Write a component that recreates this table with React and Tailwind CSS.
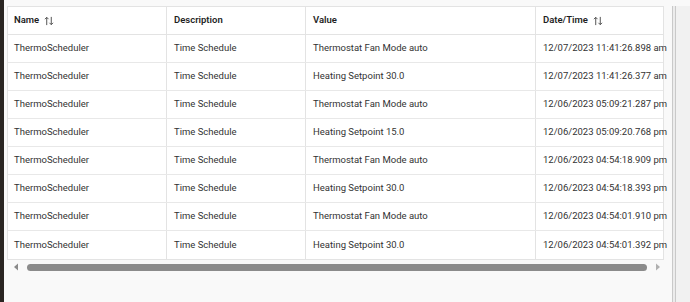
import React from 'react';

const rows = [
  ['ThermoScheduler', 'Time Schedule', 'Thermostat Fan Mode auto', '12/07/2023 11:41:26.898 am'],
  ['ThermoScheduler', 'Time Schedule', 'Heating Setpoint 30.0', '12/07/2023 11:41:26.377 am'],
  ['ThermoScheduler', 'Time Schedule', 'Thermostat Fan Mode auto', '12/06/2023 05:09:21.287 pm'],
  ['ThermoScheduler', 'Time Schedule', 'Heating Setpoint 15.0', '12/06/2023 05:09:20.768 pm'],
  ['ThermoScheduler', 'Time Schedule', 'Thermostat Fan Mode auto', '12/06/2023 04:54:18.909 pm'],
  ['ThermoScheduler', 'Time Schedule', 'Heating Setpoint 30.0', '12/06/2023 04:54:18.393 pm'],
  ['ThermoScheduler', 'Time Schedule', 'Thermostat Fan Mode auto', '12/06/2023 04:54:01.910 pm'],
  ['ThermoScheduler', 'Time Schedule', 'Heating Setpoint 30.0', '12/06/2023 04:54:01.392 pm'],
];

const widths = ['w-[159px]', 'w-[139px]', 'w-[230px]', 'w-[127px]'];

function SortIcon() {
  return (
    <svg width="10" height="10" viewBox="0 0 11 11" className="ml-[5px]" fill="none" stroke="#444" strokeWidth="1">
      <path d="M3 10V1.5M1 3.5L3 1.5L5 3.5" />
      <path d="M8 1v8.5M6 7.5L8 9.5L10 7.5" />
    </svg>
  );
}

function Cell({ i, children, head }) {
  return (
    <div
      className={`${widths[i]} shrink-0 h-full flex items-center whitespace-nowrap ${i === 0 ? 'pl-[6px]' : 'pl-[7px]'} ${i < 3 ? 'border-r border-[#e3e3e3]' : ''} ${head ? 'font-semibold text-[#1f1f1f]' : 'text-[#333]'}`}
    >
      {children}
    </div>
  );
}

export default function App() {
  return (
    <div className="flex h-[302px] w-[690px] overflow-hidden text-[9.5px]" style={{ fontFamily: 'Roboto, "Liberation Sans", sans-serif' }}>
      <div className="w-[4px] bg-[#2a2522]" />
      <div className="flex-1 bg-[#f9f9f9] pl-[3px] pt-[6px] flex">
        <div className="w-[657px]">
          <div className="bg-white border border-[#e3e3e3]">
            <div className="flex h-[28px] border-b border-[#e3e3e3]">
              <Cell i={0} head>Name <SortIcon /></Cell>
              <Cell i={1} head>Description</Cell>
              <Cell i={2} head>Value</Cell>
              <Cell i={3} head>Date/Time <SortIcon /></Cell>
            </div>
            {rows.map((r, k) => (
              <div key={k} className={`flex h-[28px] ${k < rows.length - 1 ? 'border-b border-[#e8e8e8]' : ''}`}>
                {r.map((c, i) => (
                  <Cell key={i} i={i}>{c}</Cell>
                ))}
              </div>
            ))}
          </div>
          <div className="flex items-center h-[14px] bg-[#f9f9f9]">
            <svg width="6" height="8" viewBox="0 0 6 8" className="ml-[6px]">
              <path d="M5 0.5L1 4L5 7.5Z" fill="#8a8a8a" />
            </svg>
            <div className="ml-[8px] w-[620px] h-[7px] rounded-full bg-[#8b8b8b]" />
            <svg width="6" height="8" viewBox="0 0 6 8" className="ml-[8px]">
              <path d="M1 0.5L5 4L1 7.5Z" fill="#b0b0b0" />
            </svg>
          </div>
        </div>
        <div className="ml-[8px] w-[4px] border-l border-r border-[#c9c9c9] bg-[#ececec]" />
        <div className="flex-1 bg-[#f1f1f1]" />
      </div>
    </div>
  );
}
